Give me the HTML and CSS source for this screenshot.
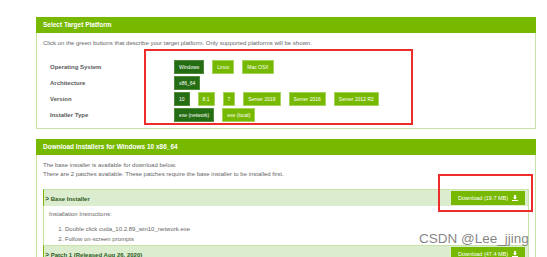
FILE: index.html
```html
<!DOCTYPE html>
<html lang="en">
<head>
  <meta charset="UTF-8" />
  <title>CUDA Toolkit Downloads</title>
  <link rel="stylesheet" href="styles.css">
</head>
<body>
  <div class="page">
    <section class="panel">
      <div class="panel-head">Select Target Platform</div>
      <div class="panel-body">
        <p class="hint">Click on the green buttons that describe your target platform. Only supported platforms will be shown.</p>
        <div class="selector">
          <div class="sel-label">Operating System</div>
          <div class="sel-opts">
            <span class="opt active">Windows</span>
            <span class="opt">Linux</span>
            <span class="opt">Mac OSX</span>
          </div>

          <div class="sel-label">Architecture</div>
          <div class="sel-opts">
            <span class="opt active">x86_64</span>
          </div>

          <div class="sel-label">Version</div>
          <div class="sel-opts">
            <span class="opt active">10</span>
            <span class="opt">8.1</span>
            <span class="opt">7</span>
            <span class="opt">Server 2019</span>
            <span class="opt">Server 2016</span>
            <span class="opt">Server 2012 R2</span>
          </div>

          <div class="sel-label">Installer Type</div>
          <div class="sel-opts">
            <span class="opt active">exe (network)</span>
            <span class="opt">exe (local)</span>
          </div>
        </div>
      </div>
    </section>

    <section class="panel panel-dl">
      <div class="panel-head">Download Installers for Windows 10 x86_64</div>
      <div class="panel-body">
        <p class="note">The base installer is available for download below.</p>
        <p class="note">There are 2 patches available. These patches require the base installer to be installed first.</p>

        <div class="installer">
          <div class="inst-bar">
            <span class="inst-title"><span class="chev">&gt;</span> Base Installer</span>
            <span class="dl-btn">Download (19.7 MB)
              <svg viewBox="0 0 10 10" width="6" height="6"><path d="M3.5 0h3v4h2.2L5 7.6 1.3 4h2.2z M0 8.4h10V10H0z" fill="#fff"/></svg>
            </span>
          </div>
          <div class="inst-body">
            <p class="inst-head">Installation Instructions:</p>
            <ol class="steps">
              <li>Double click cuda_10.2.89_win10_network.exe</li>
              <li>Follow on-screen prompts</li>
            </ol>
          </div>
          <div class="inst-bar">
            <span class="inst-title"><span class="chev">&gt;</span> Patch 1 (Released Aug 26, 2020)</span>
            <span class="dl-btn">Download (47.4 MB)
              <svg viewBox="0 0 10 10" width="6" height="6"><path d="M3.5 0h3v4h2.2L5 7.6 1.3 4h2.2z M0 8.4h10V10H0z" fill="#fff"/></svg>
            </span>
          </div>
        </div>
      </div>
    </section>

    <div class="mark mark-os"></div>
    <div class="mark mark-dl"></div>
    <div class="watermark">CSDN @Lee_jjing</div>
  </div>
</body>
</html>
```

FILE: styles.css
```css
body {
  margin: 0;
  background: #fff;
  font-family: 'Liberation Sans', Arial, sans-serif;
}
.page {
  position: relative;
  width: 500px;
  height: 240px;
  padding: 17px 11px 0 36px;
  overflow: hidden;
}
.panel {
  border: 1px solid #c9e3a6;
  border-top: none;
}
.panel-dl {
  margin-top: 10px;
}
.panel-head {
  margin: 0 -1px;
  height: 16px;
  line-height: 16px;
  padding-left: 7px;
  background: #76b900;
  color: #fff;
  font-size: 6.5px;
  font-weight: bold;
}
.panel-body {
  padding: 6px 6px 6px;
}
.hint {
  margin: 0;
  font-size: 6px;
  line-height: 9px;
  color: #666;
}
.selector {
  display: grid;
  grid-template-columns: 124px auto;
  row-gap: 2px;
  margin: 12px 0 0 7px;
}
.sel-label {
  font-size: 6px;
  font-weight: bold;
  color: #5a5a5a;
  line-height: 14px;
}
.sel-opts {
  display: flex;
  gap: 8px;
}
.opt {
  height: 12px;
  line-height: 12px;
  padding: 0 4px;
  background: #76b900;
  border: 1px solid #a6d35c;
  color: #fff;
  font-size: 5px;
}
.opt.active {
  background: #256d12;
  border-color: #4f8a3a;
}
.note {
  margin: 0;
  font-size: 6px;
  line-height: 9px;
  color: #666;
}
.panel-dl .panel-body {
  padding-top: 6px;
}
.installer {
  margin-top: 10px;
  border-left: 1px solid #c9e3a6;
  border-right: 1px solid #c9e3a6;
}
.inst-bar {
  display: flex;
  justify-content: space-between;
  align-items: center;
  height: 16px;
  padding: 0 3px 0 1px;
  background: #dcedcf;
  border-top: 1px solid #c9e3a6;
  border-left: 1px solid #76b900;
  margin-left: -1px;
}
.inst-title {
  font-size: 6px;
  font-weight: bold;
  color: #2e5a1c;
}
.chev {
  font-size: 7px;
}
.dl-btn {
  display: flex;
  align-items: center;
  gap: 4px;
  width: 64px;
  height: 14px;
  padding: 0 5px;
  background: #76b900;
  color: #fff;
  font-size: 5.5px;
  justify-content: center;
}
.inst-body {
  padding: 4px 5px 1px;
  color: #666;
  font-size: 6px;
}
.inst-head {
  margin: 0 0 5px;
  line-height: 9px;
}
.steps {
  margin: 0;
  padding-left: 16px;
  line-height: 10px;
}
.mark {
  position: absolute;
  border: 2px solid #ee2c2c;
}
.mark-os {
  left: 144px;
  top: 49px;
  width: 265px;
  height: 72px;
}
.mark-dl {
  left: 438px;
  top: 174px;
  width: 91px;
  height: 34px;
}
.watermark {
  position: absolute;
  left: 419px;
  top: 231px;
  font-size: 13.5px;
  color: rgba(90, 90, 90, 0.75);
  white-space: nowrap;
}
```
